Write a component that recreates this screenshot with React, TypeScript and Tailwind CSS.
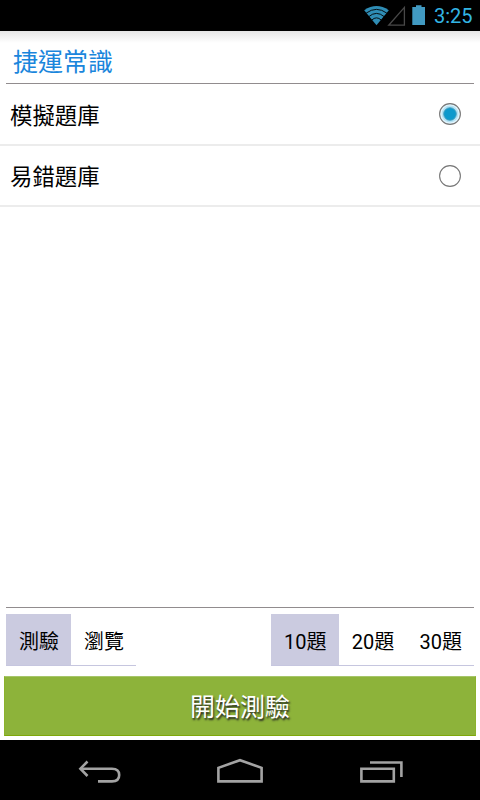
import { useState } from 'react'
import clsx from 'clsx'

const BANKS = ['模擬題庫', '易錯題庫']
const MODES = ['測驗', '瀏覽']
const COUNTS = ['10題', '20題', '30題']

function StatusBar() {
  return (
    <div className="h-[31px] shrink-0 bg-black flex items-center justify-end pr-[6px]">
      <svg width="64" height="31" viewBox="0 0 64 31" fill="none">
        {/* wifi */}
        <path d="M0.2 10.2 Q12.5 1.8 24.8 10.2 L12.5 25.3 Z" fill="#2f8db5" />
        <path d="M2.2 13.1 Q12.5 5.6 22.8 13.1" stroke="#000" strokeWidth="0.9" />
        <path d="M4.8 16.6 Q12.5 10.2 20.2 16.6" stroke="#000" strokeWidth="0.9" />
        <path d="M7.7 20.1 Q12.5 15.6 17.3 20.1" stroke="#000" strokeWidth="0.9" />
        {/* no signal */}
        <path d="M24.7 25.2 L40.4 7.4 V25.2 Z" stroke="#484848" strokeWidth="1.3" />
        {/* battery */}
        <path d="M48.3 7 H52 V5.2 H57.5 V7 H61 V25 H48.3 Z" fill="#419ac2" />
      </svg>
      <span className="ml-[6px] w-[40px] pt-px text-[20px] leading-none text-[#33b5e5] whitespace-nowrap">3:25</span>
    </div>
  )
}

function Radio({ checked }: { checked: boolean }) {
  return (
    <svg width="24" height="24" viewBox="0 0 24 24">
      <circle cx="12" cy="12" r="10.4" fill={checked ? '#e0f4fc' : '#fff'} stroke="#777" strokeWidth="1.1" />
      {checked && (
        <>
          <circle cx="12" cy="12" r="8.4" fill="#b5e2f4" />
          <circle cx="12" cy="12" r="6.3" fill="#0d99cc" stroke="#4a9fbd" strokeWidth="0.9" />
        </>
      )}
    </svg>
  )
}

type SegmentsProps = {
  items: string[]
  value: string
  onChange: (v: string) => void
  className: string
}

function Segments({ items, value, onChange, className }: SegmentsProps) {
  return (
    <div className={clsx('flex h-[52px] border-b border-[#c6c6df]', className)}>
      {items.map((item) => (
        <button
          key={item}
          onClick={() => onChange(item)}
          className={clsx('flex-1 pt-[5px] pl-px text-[20px] leading-none text-black whitespace-nowrap', item === value && 'bg-[#cbcbe0]')}
        >
          {item}
        </button>
      ))}
    </div>
  )
}

function NavBar() {
  return (
    <div className="h-[60px] shrink-0 bg-black flex items-center justify-between pl-[78px] pr-[76px]">
      <svg width="44" height="60" viewBox="0 0 44 60" fill="none" stroke="#a3a3a3" strokeWidth="2.6">
        <path d="M2.4 28.7 H34 Q41.2 28.7 41.2 35 Q41.2 41.4 34 41.4 H20" />
        <path d="M9.5 21.5 L2.4 28.7 L9.5 36" />
      </svg>
      <svg width="48" height="60" viewBox="0 0 48 60" fill="none" stroke="#a3a3a3" strokeWidth="2.6">
        <path d="M1.4 41.4 V27.8 L23 20.2 L44.6 27.8 V41.4 Z" />
      </svg>
      <svg width="44" height="60" viewBox="0 0 44 60" fill="none" stroke="#a3a3a3" strokeWidth="2.6">
        <path d="M1.4 28.7 H33.8 V41.4 H1.4 Z" />
        <path d="M10 22.5 H41.4 V37" />
      </svg>
    </div>
  )
}

export default function App() {
  const [bank, setBank] = useState(BANKS[0])
  const [mode, setMode] = useState(MODES[0])
  const [count, setCount] = useState(COUNTS[0])

  return (
    <div className="w-[480px] h-[800px] flex flex-col overflow-hidden bg-white font-[Roboto,'Noto_Sans_CJK_TC',sans-serif]">
      <StatusBar />

      <div className="flex-1 flex flex-col bg-linear-to-b from-[#e6e6e6] from-0% to-white to-[12px]">
        <h1 className="mx-[6px] h-[53px] border-b border-[#918c8e] pl-[7px] pt-[10px] flex items-center text-[25px] leading-none text-[#1a86dc]">
          捷運常識
        </h1>

        {/* Question banks */}
        <div>
          {BANKS.map((name) => (
            <button
              key={name}
              onClick={() => setBank(name)}
              className="w-full h-[61.5px] border-b-2 border-[#ececec] pl-[10px] pr-[18px] pt-px flex items-center justify-between text-[22.4px] leading-none text-black"
            >
              <span className="pt-[3px]">{name}</span>
              <Radio checked={bank === name} />
            </button>
          ))}
        </div>

        <div className="flex-1" />

        {/* Mode and length */}
        <div className="mx-[6px] border-t border-[#918c8e] pt-[6px] flex justify-between">
          <Segments items={MODES} value={mode} onChange={setMode} className="w-[130px]" />
          <Segments items={COUNTS} value={count} onChange={setCount} className="w-[203px]" />
        </div>

        <button className="mx-1 mt-[10px] mb-1 h-[60px] border border-t-[#a6c56a] border-x-[#8bb22c] border-b-[#7fa80a] bg-[#8db33a] pt-[2px] text-[25px] leading-none text-white [text-shadow:1px_2px_2px_#222]">
          開始測驗
        </button>
      </div>

      <NavBar />
    </div>
  )
}
